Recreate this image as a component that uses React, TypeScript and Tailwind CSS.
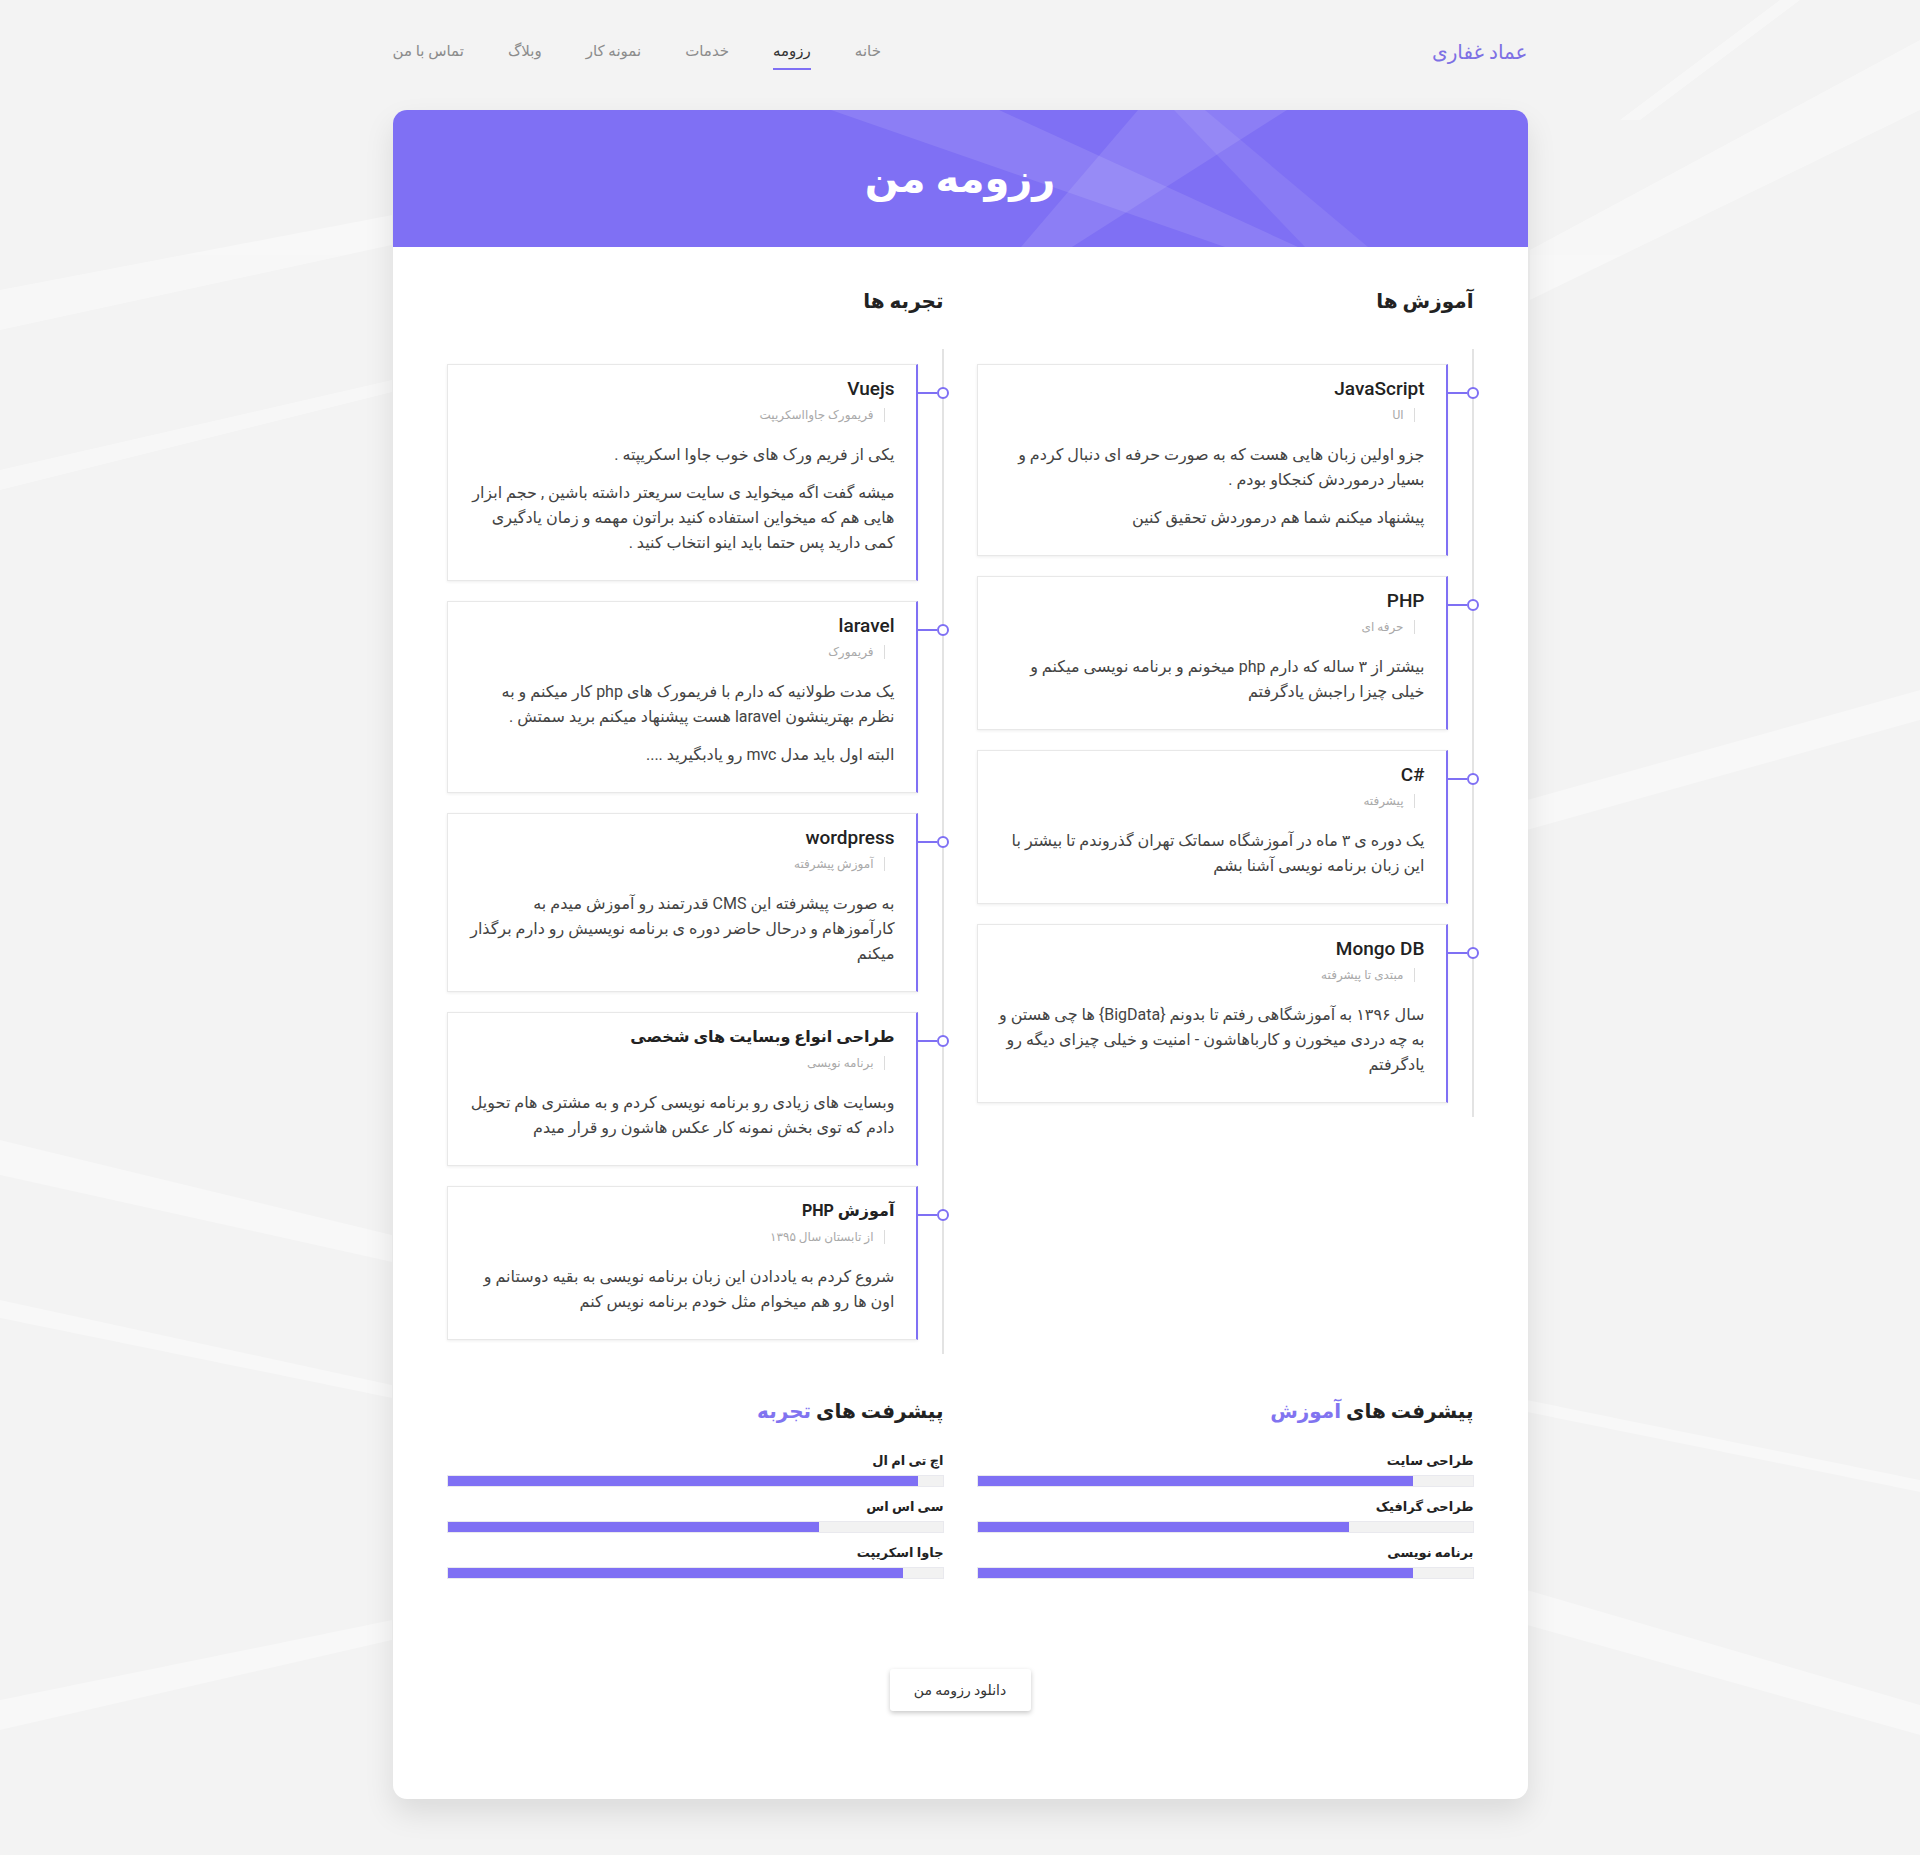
import React from "react";

type Entry = { title: string; tag: string; body: string[]; fa?: boolean };
type Skill = { label: string; value: number };

const education: Entry[] = [
  {
    title: "JavaScript",
    tag: "UI",
    body: [
      "جزو اولین زبان هایی هست که به صورت حرفه ای دنبال کردم و بسیار درموردش کنجکاو بودم .",
      "پیشنهاد میکنم شما هم درموردش تحقیق کنین",
    ],
  },
  {
    title: "PHP",
    tag: "حرفه ای",
    body: ["بیشتر از ۳ ساله که دارم php میخونم و برنامه نویسی میکنم و خیلی چیزا راجبش یادگرفتم"],
  },
  {
    title: "C#",
    tag: "پیشرفته",
    body: ["یک دوره ی ۳ ماه در آموزشگاه سماتک تهران گذروندم تا بیشتر با این زبان برنامه نویسی آشنا بشم"],
  },
  {
    title: "Mongo DB",
    tag: "مبتدی تا پیشرفته",
    body: [
      "سال ۱۳۹۶ به آموزشگاهی رفتم تا بدونم {BigData} ها چی هستن و به چه دردی میخورن و کارباهاشون - امنیت و خیلی چیزای دیگه رو یادگرفتم",
    ],
  },
];

const experience: Entry[] = [
  {
    title: "Vuejs",
    tag: "فریمورک جاوااسکریپت",
    body: [
      "یکی از فریم ورک های خوب جاوا اسکریپته .",
      "میشه گفت اگه میخواید ی سایت سریعتر داشته باشین , حجم ابزار هایی هم که میخواین استفاده کنید براتون مهمه و زمان یادگیری کمی دارید پس حتما باید اینو انتخاب کنید .",
    ],
  },
  {
    title: "laravel",
    tag: "فریمورک",
    body: [
      "یک مدت طولانیه که دارم با فریمورک های php کار میکنم و به نظرم بهترینشون laravel هست پیشنهاد میکنم برید سمتش .",
      "البته اول باید مدل mvc رو یادبگیرید ....",
    ],
  },
  {
    title: "wordpress",
    tag: "آموزش پیشرفته",
    body: [
      "به صورت پیشرفته این CMS قدرتمند رو آموزش میدم به کارآموزهام و درحال حاضر دوره ی برنامه نویسیش رو دارم برگذار میکنم",
    ],
  },
  {
    title: "طراحی انواع وبسایت های شخصی",
    tag: "برنامه نویسی",
    fa: true,
    body: [
      "وبسایت های زیادی رو برنامه نویسی کردم و به مشتری هام تحویل دادم که توی بخش نمونه کار عکس هاشون رو قرار میدم",
    ],
  },
  {
    title: "آموزش PHP",
    tag: "از تابستان سال ۱۳۹۵",
    fa: true,
    body: [
      "شروع کردم به یاددادن این زبان برنامه نویسی به بقیه دوستانم و اون ها رو هم میخوام مثل خودم برنامه نویس کنم",
    ],
  },
];

const eduSkills: Skill[] = [
  { label: "طراحی سایت", value: 88 },
  { label: "طراحی گرافیک", value: 75 },
  { label: "برنامه نویسی", value: 88 },
];

const expSkills: Skill[] = [
  { label: "اچ تی ام ال", value: 95 },
  { label: "سی اس اس", value: 75 },
  { label: "جاوا اسکریپت", value: 92 },
];

const navLinks = ["خانه", "رزومه", "خدمات", "نمونه کار", "وبلاگ", "تماس با من"];

function PageStripes() {
  return (
    <svg
      className="absolute inset-0 w-full h-full pointer-events-none"
      viewBox="0 0 1920 1855"
      preserveAspectRatio="none"
    >
      <g fill="#ffffff" opacity="0.4">
        <polygon points="1780,0 1800,0 1640,120 1620,120" />
        <polygon points="1920,40 1920,110 1530,300 1530,250" />
        <polygon points="0,290 392,215 392,245 0,330" />
        <polygon points="0,470 392,380 392,392 0,490" />
        <polygon points="0,1140 392,1235 392,1262 0,1175" />
        <polygon points="0,1300 392,1385 392,1398 0,1318" />
        <polygon points="0,1700 392,1620 392,1640 0,1730" />
        <polygon points="1527,800 1920,690 1920,720 1527,830" />
        <polygon points="1527,1590 1920,1705 1920,1735 1527,1625" />
        <polygon points="1527,1400 1920,1480 1920,1492 1527,1412" />
      </g>
    </svg>
  );
}

function HeaderStripes() {
  return (
    <svg
      className="absolute inset-0 w-full h-full pointer-events-none"
      viewBox="0 0 1135 137"
      preserveAspectRatio="none"
    >
      <g fill="#ffffff">
        <polygon points="438,0 606,0 905,137 832,137" opacity="0.1" />
        <polygon points="745,0 894,0 679,137 628,137" opacity="0.1" />
        <polygon points="781,0 812,0 975,137 912,137" opacity="0.08" />
      </g>
    </svg>
  );
}

function TimelineCard({ item }: { item: Entry }) {
  return (
    <div className="relative mr-[24px] bg-white border border-[#e8e8e8] border-r-2 border-r-[#7f70f4] shadow-[0_1px_3px_rgba(0,0,0,0.07)] px-[21px] pt-[12px] pb-[25px]">
      <span className="absolute top-[27px] -right-[21px] w-[21px] h-[2px] bg-[#7f70f4]" />
      <span className="absolute top-[22px] -right-[33px] w-[12px] h-[12px] rounded-full border-2 border-[#7f70f4] bg-white" />
      <h3
        className={
          item.fa
            ? "text-[16px] leading-[24px] text-[#222] font-bold"
            : "text-[19px] leading-[24px] text-[#222] font-medium"
        }
      >
        <bdi>{item.title}</bdi>
      </h3>
      <div className="mt-[4px] text-[12px] leading-[18px] text-[#a9a9a9]">
        <span className="inline-block align-middle mr-[10px] pr-[10px] border-r border-[#dcdcdc] leading-[14px]">
          {item.tag}
        </span>
      </div>
      <div className="mt-[19px] text-[16px] leading-[25px] text-[#444] flex flex-col gap-[13px]">
        {item.body.map((p, i) => (
          <p key={i}>{p}</p>
        ))}
      </div>
    </div>
  );
}

function TimelineColumn({ heading, items }: { heading: string; items: Entry[] }) {
  return (
    <section>
      <h2 className="text-[20px] leading-[30px] font-bold text-[#222]">{heading}</h2>
      <div className="mt-[33px] border-r-2 border-[#e3e3e3] pt-[15px] pb-[14px] flex flex-col gap-[20px]">
        {items.map((it) => (
          <TimelineCard key={it.title} item={it} />
        ))}
      </div>
    </section>
  );
}

function SkillColumn({ lead, accent, skills }: { lead: string; accent: string; skills: Skill[] }) {
  return (
    <section>
      <h2 className="text-[20px] leading-[30px] font-bold text-[#222]">
        {lead} <span className="text-[#8174f0]">{accent}</span>
      </h2>
      <div className="mt-[25px] flex flex-col gap-[10px]">
        {skills.map((s) => (
          <div key={s.label}>
            <div className="text-[13px] leading-[20px] font-bold text-[#222]">{s.label}</div>
            <div dir="ltr" className="mt-[4px] h-[12px] bg-[#f2f2f2] border border-[#e9e9ee]">
              <div className="h-full bg-[#7f70f4]" style={{ width: `${s.value}%` }} />
            </div>
          </div>
        ))}
      </div>
    </section>
  );
}

export default function App() {
  return (
    <div
      dir="rtl"
      className="relative min-h-[1855px] bg-[#f3f3f3] overflow-hidden font-[family-name:Roboto,'DejaVu_Sans',sans-serif]"
    >
      <PageStripes />
      <div className="relative w-[1135px] mx-auto">
        <nav className="h-[110px] pt-[40px] flex justify-between items-start">
          <a className="text-[20px] leading-[24px] text-[#7d70e4]">عماد غفاری</a>
          <ul className="flex gap-[44px]">
            {navLinks.map((l) =>
              l === "رزومه" ? (
                <li key={l} className="text-[15px] leading-[22px] text-[#333] pb-[6px] border-b-2 border-[#7f70f4]">
                  {l}
                </li>
              ) : (
                <li key={l} className="text-[15px] leading-[22px] text-[#8c8c8c]">
                  {l}
                </li>
              )
            )}
          </ul>
        </nav>

        <main className="bg-white rounded-[14px] shadow-[0_14px_30px_rgba(0,0,0,0.1)]">
          <header className="relative h-[137px] rounded-t-[14px] bg-[#7f70f4] overflow-hidden flex items-center justify-center">
            <HeaderStripes />
            <h1 className="relative text-[40px] leading-[50px] font-bold text-white">رزومه من</h1>
          </header>

          <div className="px-[54px] pt-[39px] pb-[88px]">
            <div className="grid grid-cols-2 gap-x-[33px] items-start">
              <TimelineColumn heading="آموزش ها" items={education} />
              <TimelineColumn heading="تجربه ها" items={experience} />
            </div>

            <div className="mt-[42px] grid grid-cols-2 gap-x-[33px]">
              <SkillColumn lead="پیشرفت های" accent="آموزش" skills={eduSkills} />
              <SkillColumn lead="پیشرفت های" accent="تجربه" skills={expSkills} />
            </div>

            <div className="mt-[90px] flex justify-center">
              <button className="w-[141px] h-[42px] bg-white rounded-[3px] shadow-[0_2px_5px_rgba(0,0,0,0.22)] text-[14px] text-[#333]">
                دانلود رزومه من
              </button>
            </div>
          </div>
        </main>
      </div>
    </div>
  );
}
